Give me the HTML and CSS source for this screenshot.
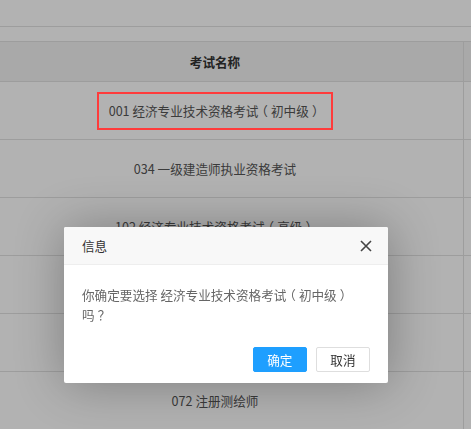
FILE: index.html
```html
<!DOCTYPE html>
<html lang="zh-CN">
<head>
  <meta charset="UTF-8">
  <meta name="viewport" content="width=device-width, initial-scale=1.0">
  <title>选择考试</title>
  <link rel="stylesheet" href="styles.css">
</head>
<body>
  <div class="toolbar"></div>

  <div class="table-wrap">
    <div class="exam-table">
      <div class="row head">
        <div class="cell name">考试名称</div>
        <div class="cell op"></div>
      </div>
      <div class="row">
        <div class="cell name"><span class="picked">001 经济专业技术资格考试<span class="punc">（</span>初中级<span class="punc">）</span></span></div>
        <div class="cell op"></div>
      </div>
      <div class="row">
        <div class="cell name">034 一级建造师执业资格考试</div>
        <div class="cell op"></div>
      </div>
      <div class="row">
        <div class="cell name">102 经济专业技术资格考试<span class="punc">（</span>高级<span class="punc">）</span></div>
        <div class="cell op"></div>
      </div>
      <div class="row">
        <div class="cell name"></div>
        <div class="cell op"></div>
      </div>
      <div class="row">
        <div class="cell name"></div>
        <div class="cell op"></div>
      </div>
      <div class="row">
        <div class="cell name">072 注册测绘师</div>
        <div class="cell op"></div>
      </div>
    </div>
  </div>

  <div class="shade"></div>

  <div class="layer">
    <div class="layer-title">
      信息
      <span class="layer-close">
        <svg width="12" height="12" viewBox="0 0 12 12">
          <path d="M1 1 L11 11 M11 1 L1 11" stroke="#444" stroke-width="1.6" fill="none"/>
        </svg>
      </span>
    </div>
    <div class="layer-content">你确定要选择 经济专业技术资格考试<span class="punc">（</span>初中级<span class="punc">）</span><span class="nobr">吗<span class="punc">？</span></span></div>
    <div class="layer-btns">
      <a class="btn btn-primary">确定</a>
      <a class="btn">取消</a>
    </div>
  </div>
</body>
</html>
```

FILE: styles.css
```css
:root {
  --line-color: #e1e1e1;
  --head-bg: #f2f2f2;
  --text-color: #555;
  --blue: #1e9fff;
  --font-size: 12.6px;
}
* {
  box-sizing: border-box;
}
body {
  margin: 0;
  background-color: #fff;
  font-family: "Microsoft YaHei", "Noto Sans CJK SC", sans-serif;
  font-size: var(--font-size);
  color: var(--text-color);
}
/* full-width punctuation centred in its box, like YaHei */
.punc {
  display: inline-block;
  width: 1em;
  text-align: center;
  font-feature-settings: "halt";
}
.nobr {
  white-space: nowrap;
}
.toolbar {
  height: 27px;
  border-bottom: 1px solid var(--line-color);
  margin-bottom: 14px;
}
.table-wrap {
  overflow: hidden;
  border-top: 1px solid var(--line-color);
}
.exam-table {
  margin-left: -33px;
}
.row {
  display: flex;
  height: 58px;
  border-bottom: 1px solid var(--line-color);
}
.row.head {
  height: 40px;
  background-color: var(--head-bg);
  color: #333;
  font-weight: bold;
}
.cell {
  display: flex;
  align-items: center;
  justify-content: center;
}
.cell.name {
  width: 497px;
  flex-shrink: 0;
  border-right: 1px solid var(--line-color);
}
.cell.op {
  flex: 1;
}
.picked {
  position: relative;
  display: inline-block;
  padding: 0 12px;
  line-height: 38px;
}
.picked::after {
  content: "";
  position: absolute;
  inset: 0;
  border: 2px solid #ff3b3b;
  z-index: 20;
}
.shade {
  position: fixed;
  inset: 0;
  background-color: rgba(0, 0, 0, 0.3);
  z-index: 10;
}
.layer {
  position: fixed;
  left: 64px;
  top: 227px;
  width: 324px;
  background-color: #fff;
  border-radius: 2px;
  box-shadow: 1px 1px 50px rgba(0, 0, 0, 0.3);
  z-index: 30;
}
.layer-title {
  position: relative;
  height: 38px;
  line-height: 37px;
  padding: 0 18px;
  background-color: #f8f8f8;
  border-bottom: 1px solid #eee;
  border-radius: 2px 2px 0 0;
  color: #333;
}
.layer-close {
  position: absolute;
  right: 16px;
  top: 13px;
  width: 12px;
  height: 12px;
  display: flex;
}
.layer-content {
  padding: 20px 18px 18px;
  line-height: 20px;
  color: #666;
}
.layer-btns {
  display: flex;
  justify-content: flex-end;
  gap: 9px;
  padding: 4px 18px 11px;
}
.btn {
  height: 25px;
  line-height: 23px;
  padding: 0 13.5px;
  border: 1px solid #dedede;
  border-radius: 2px;
  background-color: #fff;
  color: #333;
  cursor: pointer;
}
.btn-primary {
  border-color: var(--blue);
  background-color: var(--blue);
  color: #fff;
}
```
